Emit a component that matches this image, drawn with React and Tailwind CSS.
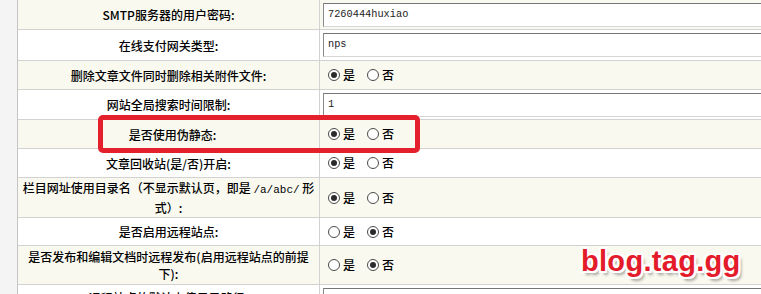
import React from "react";

const CJK = { fontFamily: '"Noto Sans CJK SC", "Noto Sans", sans-serif' };

function Radio({ checked }) {
  return (
    <span className="inline-flex items-center justify-center w-[12px] h-[12px] rounded-full border border-[#4a4a4a] bg-white">
      {checked && <span className="w-[6px] h-[6px] rounded-full bg-[#2b2b2b]" />}
    </span>
  );
}

function YesNo({ yes }) {
  return (
    <div className="flex items-center pl-[8px] text-[12px] font-medium text-[#000]" style={CJK}>
      <Radio checked={yes} />
      <span className="ml-[3px]">是</span>
      <span className="ml-[12px] flex items-center">
        <Radio checked={!yes} />
      </span>
      <span className="ml-[3px]">否</span>
    </div>
  );
}

function TextInput({ value }) {
  return (
    <div className="pl-[3px] w-full">
      <div className="w-[460px] h-[24px] bg-white border border-t-[#767676] border-l-[#8a8a8a] border-b-[#d6d6d6] border-r-[#d6d6d6] flex items-center pl-[4px] text-[10.3px] text-[#222]" style={{ fontFamily: '"Liberation Mono", monospace' }}>
        {value}
      </div>
    </div>
  );
}

function Row({ h, cream, label, children }) {
  return (
    <div className={`flex shrink-0 border-b border-[#d2d2d2] ${cream ? "bg-[#f9f9ef]" : "bg-white"} ${h}`}>
      <div className="w-[302px] shrink-0 border-r border-[#d2d2d2] flex items-center justify-center text-center text-[12px] font-medium text-[#000] leading-[17px] whitespace-nowrap" style={CJK}>
        <div>{label}</div>
      </div>
      <div className="flex-1 flex items-center">{children}</div>
    </div>
  );
}

const Mono = ({ children }) => (
  <span className="text-[11px] font-normal" style={{ fontFamily: '"Liberation Mono", monospace' }}>{children}</span>
);

export default function App() {
  return (
    <div className="relative w-[761px] h-[294px] overflow-hidden bg-white flex">
      <div className="w-[18px] shrink-0 bg-[#f4f4f4] border-r border-[#c4c4c4]" />
      <div className="flex-1 flex flex-col">
        <Row h="h-[30px]" cream label={<>SMTP服务器的用户密码:</>}>
          <TextInput value="7260444huxiao" />
        </Row>
        <Row h="h-[31px]" label="在线支付网关类型:">
          <TextInput value="nps" />
        </Row>
        <Row h="h-[29px]" cream label="删除文章文件同时删除相关附件文件:">
          <YesNo yes />
        </Row>
        <Row h="h-[30px]" label="网站全局搜索时间限制:">
          <TextInput value="1" />
        </Row>
        <Row h="h-[29px]" cream label={<span className="pl-[8px]">是否使用伪静态:</span>}>
          <YesNo yes />
        </Row>
        <Row h="h-[29px]" label="文章回收站(是/否)开启:">
          <YesNo yes />
        </Row>
        <Row
          h="h-[40px]"
          cream
          label={
            <>
              栏目网址使用目录名（不显示默认页，即是 <Mono>/a/abc/</Mono> 形
              <br />
              式）:
            </>
          }
        >
          <YesNo yes />
        </Row>
        <Row h="h-[28px]" label="是否启用远程站点:">
          <YesNo yes={false} />
        </Row>
        <Row
          h="h-[39px]"
          cream
          label={
            <>
              是否发布和编辑文档时远程发布(启用远程站点的前提
              <br />
              下):
            </>
          }
        >
          <YesNo yes={false} />
        </Row>
        <div className="flex shrink-0 bg-white h-[30px]">
          <div className="w-[302px] shrink-0 border-r border-[#d2d2d2] flex justify-center pt-[4px] text-[12px] font-medium text-[#000]" style={CJK}>
            远程站点的默认上传目录路径:
          </div>
          <div className="flex-1 pt-[3px]">
            <TextInput value="" />
          </div>
        </div>
      </div>

      <div className="absolute left-[98px] top-[115px] w-[322px] h-[38px] border-[5px] border-[#e3202c] rounded-[5px]" />

      <div
        className="absolute left-[581px] top-[241px] text-[29px] font-bold text-[#e31b2a] leading-[40px] tracking-[0.3px]"
        style={{
          fontFamily: '"Liberation Sans", Arial, sans-serif',
          textShadow:
            "1px 0 0 #fff, -1px 0 0 #fff, 0 1px 0 #fff, 0 -1px 0 #fff, 2px 2px 0 #fff, -2px 2px 0 #fff, 2px -2px 0 #fff, -2px -2px 0 #fff, 2px 0 0 #fff, -2px 0 0 #fff, 0 2px 0 #fff, 0 -2px 0 #fff, 3px 4px 3px rgba(0,0,0,0.35)",
        }}
      >
        blog.tag.gg
      </div>
    </div>
  );
}
